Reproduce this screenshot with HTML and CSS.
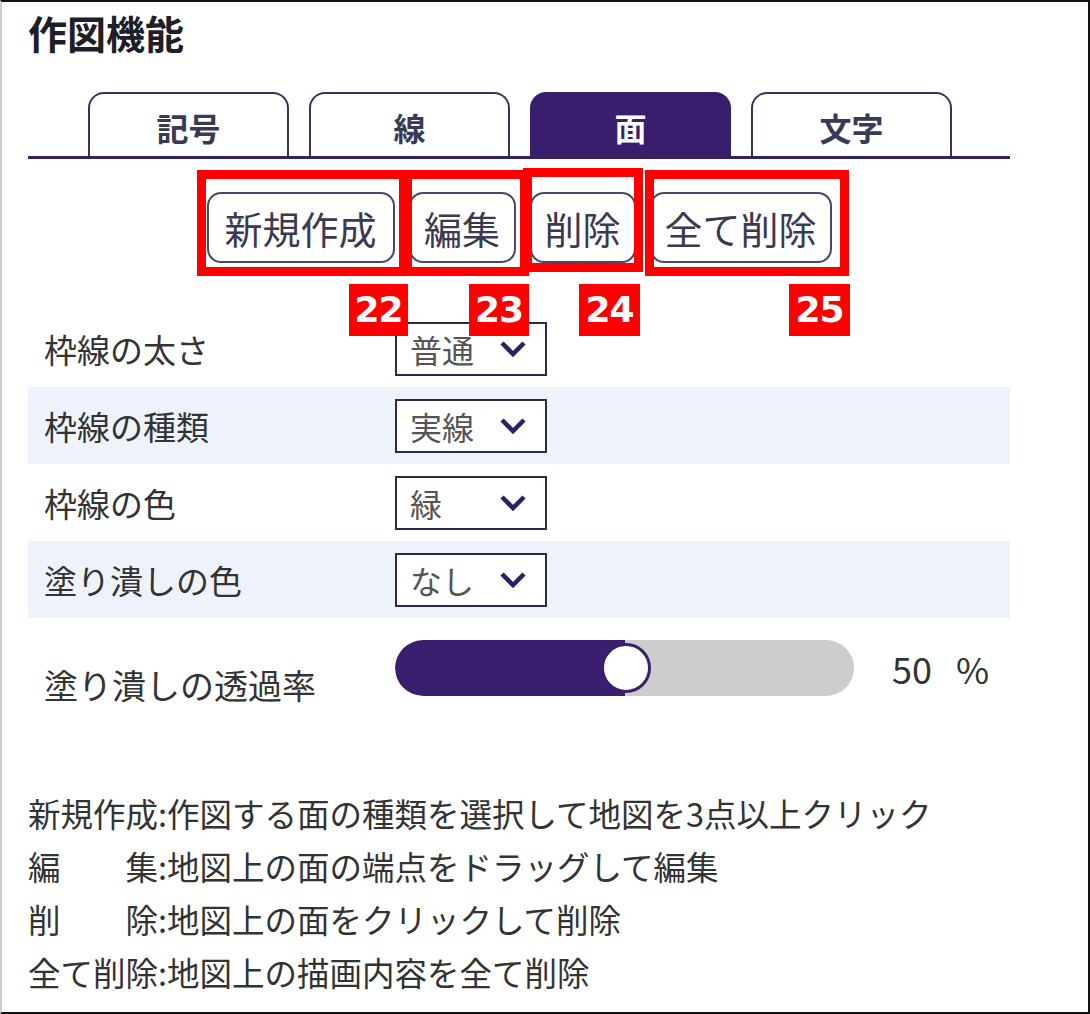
FILE: index.html
```html
<!DOCTYPE html>
<html lang="ja">
<head>
    <meta charset="UTF-8">
    <meta name="viewport" content="width=device-width, initial-scale=1.0">
    <title>作図機能</title>
    <link rel="stylesheet" href="styles.css">
</head>
<body>
    <div class="panel">
        <h1 class="title">作図機能</h1>

        <nav class="tabs">
            <a class="tab">記号</a>
            <a class="tab">線</a>
            <a class="tab active">面</a>
            <a class="tab">文字</a>
        </nav>

        <div class="tools">
            <button class="tool w-new">新規作成</button>
            <button class="tool w-edit">編集</button>
            <button class="tool w-del">削除</button>
            <button class="tool w-all">全て削除</button>
        </div>

        <div class="settings">
            <div class="row">
                <span class="label">枠線の太さ</span>
                <div class="select"><span>普通</span><svg viewBox="0 0 28 18"><path d="M3 3 L14 14 L25 3"/></svg></div>
            </div>
            <div class="row alt">
                <span class="label">枠線の種類</span>
                <div class="select"><span>実線</span><svg viewBox="0 0 28 18"><path d="M3 3 L14 14 L25 3"/></svg></div>
            </div>
            <div class="row">
                <span class="label">枠線の色</span>
                <div class="select"><span>緑</span><svg viewBox="0 0 28 18"><path d="M3 3 L14 14 L25 3"/></svg></div>
            </div>
            <div class="row alt">
                <span class="label">塗り潰しの色</span>
                <div class="select"><span>なし</span><svg viewBox="0 0 28 18"><path d="M3 3 L14 14 L25 3"/></svg></div>
            </div>
            <div class="row slider-row">
                <span class="label low">塗り潰しの透過率</span>
                <div class="slider">
                    <div class="fill" style="width: 50%"></div>
                    <div class="knob"></div>
                </div>
                <span class="value">50<span class="unit">%</span></span>
            </div>
        </div>

        <dl class="help">
            <div><dt>新規作成</dt><dd>:作図する面の種類を選択して地図を3点以上クリック</dd></div>
            <div><dt>編集</dt><dd>:地図上の面の端点をドラッグして編集</dd></div>
            <div><dt>削除</dt><dd>:地図上の面をクリックして削除</dd></div>
            <div><dt>全て削除</dt><dd>:地図上の描画内容を全て削除</dd></div>
        </dl>

        <!-- numbered callouts -->
        <div class="mark m22"></div>
        <div class="mark m23"></div>
        <div class="mark m24"></div>
        <div class="mark m25"></div>
        <span class="num n22">22</span>
        <span class="num n23">23</span>
        <span class="num n24">24</span>
        <span class="num n25">25</span>
    </div>
</body>
</html>
```
FILE: styles.css
```css
body { margin: 0; background: #fff; font-family: "Noto Sans CJK JP", "Noto Sans", sans-serif; color: #333; }
.panel { position: relative; width: 1090px; height: 1014px; box-sizing: border-box; border: 2px solid #111; border-left-color: #ccc; }

.title { margin: 0; padding: 4px 0 0 26px; font-size: 39px; line-height: 52px; font-weight: bold; color: #1e1e28; }

.tabs { display: flex; gap: 20px; margin: 34px 0 0 26px; padding-left: 60px; width: 922px; border-bottom: 3px solid #33245f; }
.tab { width: 201px; height: 64px; box-sizing: border-box; border: 2px solid #3a3158; border-bottom: none; border-radius: 16px 16px 0 0; display: flex; align-items: center; justify-content: center; padding-top: 3px; font-size: 32px; font-weight: bold; color: #3b3a55; }
.tab.active { background: #381e6c; border-color: #381e6c; color: #fff; }

.tools { display: flex; justify-content: center; gap: 14px; width: 982px; margin: 33px 0 0 26px; }
.tool { height: 71px; box-sizing: border-box; border: 2px solid #4b4768; border-radius: 14px; background: #fff; font-family: inherit; font-size: 38px; color: #3b3950; padding: 0; }
.w-new { width: 188px; }
.w-edit { width: 107px; }
.w-del { width: 106px; }
.w-all { width: 182px; }

.settings { width: 982px; margin: 47px 0 0 26px; }
.row { display: flex; align-items: center; height: 77px; }
.row.alt { background: #eef3fb; }
.label { width: 351px; padding-left: 16px; font-size: 33px; color: #333; }
.select { width: 152px; height: 54px; box-sizing: border-box; border: 2px solid #2c2848; display: flex; align-items: center; justify-content: space-between; padding: 0 18px 0 13px; background: #fff; font-size: 32px; color: #555; }
.select svg { width: 28px; height: 18px; }
.select path { fill: none; stroke: #2d1f63; stroke-width: 4.5; }

.slider-row { height: 106px; }
.label.low { padding-top: 26px; font-size: 34px; }
.slider { position: relative; width: 459px; height: 56px; border-radius: 28px; background: #cdcdcd; overflow: hidden; margin-bottom: 6px; }
.fill { height: 100%; background: #3a1f6e; border-radius: 28px 0 0 28px; }
.knob { position: absolute; left: 206px; top: 3px; width: 44px; height: 44px; border: 3px solid #3a1f6e; border-radius: 50%; background: #fff; }
.value { margin-left: 38px; font-size: 36px; color: #333; margin-bottom: 6px; }
.unit { margin-left: 24px; }

.help { margin: 62px 0 0 26px; font-size: 32.5px; line-height: 53px; color: #333; }
.help div { display: flex; }
.help dt { width: 130px; text-align-last: justify; }
.help dd { margin: 0; }

.mark { position: absolute; border: 9px solid #f00; box-sizing: border-box; }
.m22 { left: 195px; top: 168px; width: 211px; height: 106px; }
.m23 { left: 401px; top: 168px; width: 126px; height: 106px; }
.m24 { left: 521px; top: 166px; width: 120px; height: 104px; }
.m25 { left: 643px; top: 168px; width: 204px; height: 106px; }
.num { position: absolute; top: 282px; height: 52px; background: #f00; color: #fff; font-family: "DejaVu Sans", sans-serif; font-weight: bold; font-size: 36px; line-height: 52px; text-align: center; letter-spacing: -1px; }
.n22 { left: 347px; width: 59px; }
.n23 { left: 467px; width: 60px; }
.n24 { left: 577px; width: 61px; }
.n25 { left: 787px; width: 61px; }
```
